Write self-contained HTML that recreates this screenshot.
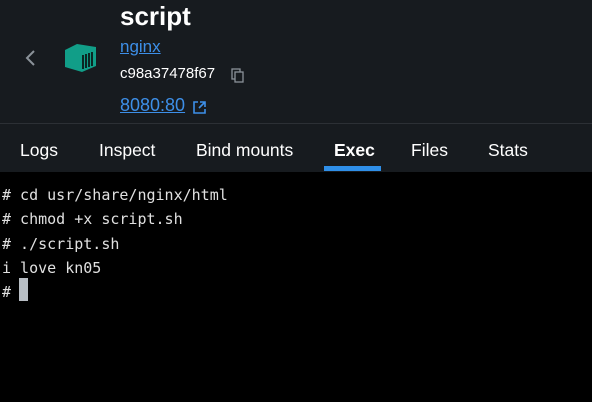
<!DOCTYPE html>
<html><head><style>
body{margin:0;width:592px;height:402px;overflow:hidden;background:#000;font-family:"Liberation Sans",Roboto,sans-serif}
.hdr{position:absolute;left:0;top:0;width:592px;height:172px;background:#171b1f}
.line{position:absolute;left:0;top:123px;width:592px;height:1px;background:#2c3035}
.t{position:absolute;color:#fff}
.link{color:#3d8fe8;text-decoration:underline;position:absolute}
.tab{position:absolute;top:140px;font-size:17.5px;color:#fff}
.term{position:absolute;left:2px;top:183px;font-family:"DejaVu Sans Mono",monospace;font-size:15px;line-height:24.3px;color:#e0e0e0;white-space:pre}
</style></head><body>
<div class="hdr"></div>
<div class="line"></div>
<svg style="position:absolute;left:22px;top:48px" width="18" height="20"><path d="M12 3 L5 10 L12 17" stroke="#8b9299" stroke-width="2" fill="none"/></svg>
<svg style="position:absolute;left:63px;top:42px" width="36" height="32" viewBox="0 0 36 32">
<path d="M2 8 L14 2 L33 5 L33 24 L19 30 L2 25 Z" fill="#119e88"/>
<path d="M20 13v14M23 12v14M26 11v14M29 10v14" stroke="#0b1a18" stroke-width="1.8"/>
</svg>
<div class="t" style="left:120px;top:1px;font-size:26px;font-weight:bold">script</div>
<div class="link" style="left:120px;top:37px;font-size:17px">nginx</div>
<div class="t" style="left:120px;top:65px;font-size:15px;font-weight:500">c98a37478f67</div>
<svg style="position:absolute;left:231px;top:68px" width="14" height="15"><rect x="1" y="1" width="8" height="10" fill="none" stroke="#8b9299" stroke-width="1.3"/><rect x="4" y="4" width="8" height="10" fill="#171b1f" stroke="#8b9299" stroke-width="1.3"/></svg>
<div class="link" style="left:120px;top:95px;font-size:18px">8080:80</div>
<svg style="position:absolute;left:192px;top:100px" width="15" height="15"><path d="M6 2H2V13H13V9M8 2H13V7M13 2L7 8" stroke="#3d8fe8" stroke-width="1.6" fill="none"/></svg>
<div class="tab" style="left:20px">Logs</div>
<div class="tab" style="left:99px">Inspect</div>
<div class="tab" style="left:196px">Bind mounts</div>
<div class="tab" style="left:334px;font-weight:bold">Exec</div>
<div class="tab" style="left:411px">Files</div>
<div class="tab" style="left:488px">Stats</div>
<div style="position:absolute;left:324px;top:166px;width:57px;height:5px;background:#2f8fe8"></div>
<div class="term"># cd usr/share/nginx/html
# chmod +x script.sh
# ./script.sh
i love kn05
# </div>
<div style="position:absolute;left:19px;top:278px;width:9px;height:23px;background:#b8bec4"></div>
</body></html>
